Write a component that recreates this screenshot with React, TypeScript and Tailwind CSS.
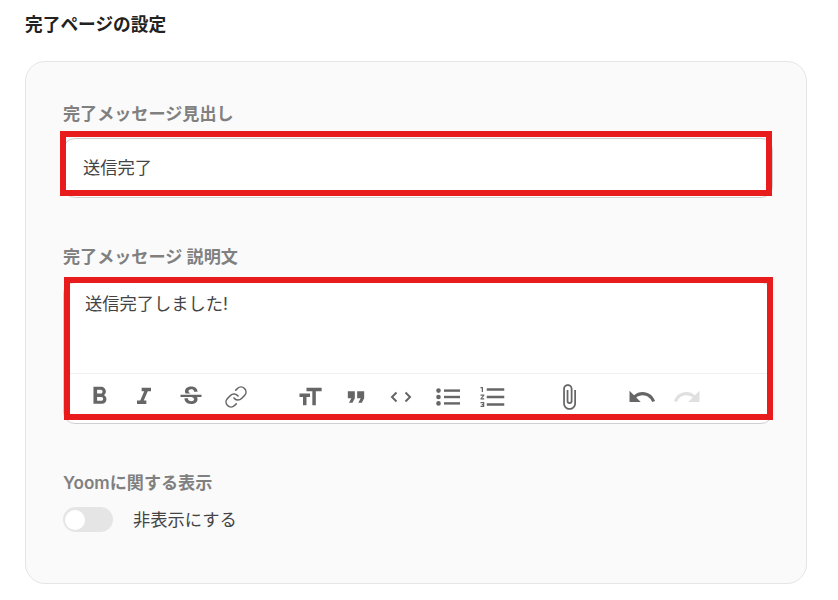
import { Link } from "lucide-react";
import type { ReactNode } from "react";
import {
  MdAttachFile,
  MdFormatBold,
  MdFormatItalic,
  MdFormatListNumbered,
  MdFormatQuote,
  MdFormatSize,
  MdRedo,
  MdStrikethroughS,
  MdUndo,
} from "react-icons/md";

const font = "font-['Inter','Noto_Sans_CJK_JP',sans-serif]";

function Label({ children }: { children: ReactNode }) {
  return <div className="text-[17.1px] leading-[24px] font-semibold text-[#808080]">{children}</div>;
}

function Tool({ children }: { children: ReactNode }) {
  return <div className="flex h-[30px] w-[45px] items-center justify-center">{children}</div>;
}

function CodeIcon() {
  return (
    <svg width="22" height="12" viewBox="0 0 22 12" fill="none" stroke="currentColor" strokeWidth="2">
      <path d="M6.5 1.5 2 6l4.5 4.5" />
      <path d="M15.5 1.5 20 6l-4.5 4.5" />
    </svg>
  );
}

function BulletsIcon() {
  return (
    <svg width="24" height="18" viewBox="0 0 24 18" fill="currentColor">
      <circle cx="2.5" cy="2.6" r="2.3" />
      <circle cx="2.5" cy="9" r="2.3" />
      <circle cx="2.5" cy="15.4" r="2.3" />
      <rect x="8" y="1.4" width="16" height="2.4" />
      <rect x="8" y="7.8" width="16" height="2.4" />
      <rect x="8" y="14.2" width="16" height="2.4" />
    </svg>
  );
}

export default function App() {
  return (
    <div className={`${font} h-[600px] w-[838px] overflow-hidden bg-white pl-[25px] pr-[31px] pt-[13px]`}>
      <h2 className="text-[17.7px] leading-[24px] font-semibold text-[#222]">完了ページの設定</h2>

      <div className="mt-[24px] h-[523px] rounded-[20px] border border-[#e5e5e5] bg-[#fafafa] pl-[37px] pr-[33px] pt-[40px]">
        <Label>完了メッセージ見出し</Label>
        <div className="relative mt-[12px]">
          <div className="flex h-[60px] items-center rounded-[12px] border border-[#d0d0d0] bg-white pl-[19px] text-[17.25px] text-[#444]">
            送信完了
          </div>
          <div className="absolute left-[-3px] top-[-7px] h-[65px] w-[712px] border-[6px] border-[#e81c1c]" />
        </div>

        <div className="mt-[47px]">
          <Label>完了メッセージ 説明文</Label>
        </div>
        <div className="relative mt-[13px]">
          <div className="h-[142px] rounded-[12px] border border-[#d0d0d0] bg-white">
            <div className="h-[90px] pl-[21px] pt-[8px] text-[17.25px] leading-[26px] text-[#444]">送信完了しました!</div>
            <div className="flex h-[50px] items-center border-t border-[#f0f0f0] pb-[4px] pl-[14px] text-[#666]">
              <div className="-ml-[1px]"><Tool><MdFormatBold size={29} /></Tool></div>
              <div className="-ml-[1px]"><Tool><MdFormatItalic size={28} /></Tool></div>
              <div className="ml-[2px]"><Tool><MdStrikethroughS size={28} /></Tool></div>
              <Tool><Link size={24} strokeWidth={1.6} /></Tool>
              <div className="w-[29px]" />
              <Tool><MdFormatSize size={28} /></Tool>
              <div className="ml-[1px]"><Tool><MdFormatQuote size={28} /></Tool></div>
              <Tool><CodeIcon /></Tool>
              <div className="ml-[2px]"><Tool><BulletsIcon /></Tool></div>
              <Tool><MdFormatListNumbered size={30} /></Tool>
              <div className="w-[31px]" />
              <Tool><MdAttachFile size={28} /></Tool>
              <div className="w-[28px]" />
              <Tool><MdUndo size={30} /></Tool>
              <Tool><MdRedo size={30} className="text-[#e0e0e0]" /></Tool>
            </div>
          </div>
          <div className="absolute left-[1px] top-[-5px] h-[143px] w-[709px] border-[6px] border-[#e81c1c]" />
        </div>

        <div className="mt-[47px]">
          <Label>Yoomに関する表示</Label>
        </div>
        <div className="mt-[12px] flex items-center">
          <div className="flex h-[25px] w-[50px] items-center rounded-full bg-[#e5e5e5] pl-[2px]">
            <div className="h-[20px] w-[20px] rounded-full bg-white" />
          </div>
          <span className="ml-[20px] text-[17.3px] text-[#444]">非表示にする</span>
        </div>
      </div>
    </div>
  );
}
